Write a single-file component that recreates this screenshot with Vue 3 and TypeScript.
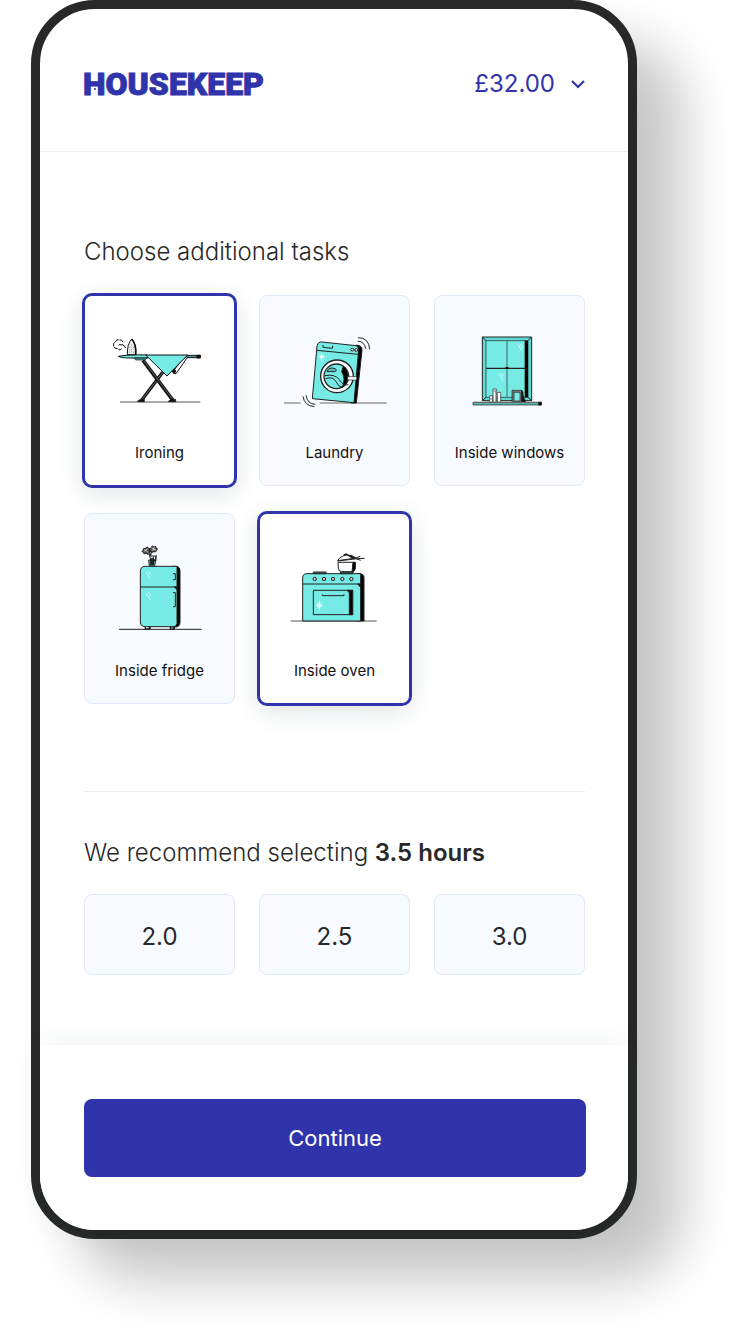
<script setup lang="ts">
import { ref } from 'vue'

interface Task {
  id: string
  label: string
  viewBox: string
}

const tasks: Task[] = [
  { id: 'ironing', label: 'Ironing', viewBox: '30 33 447 423' },
  { id: 'laundry', label: 'Laundry', viewBox: '16 33 447 423' },
  { id: 'windows', label: 'Inside windows', viewBox: '30 33 447 423' },
  { id: 'fridge', label: 'Inside fridge', viewBox: '30 27 447 423' },
  { id: 'oven', label: 'Inside oven', viewBox: '15 27 447 423' },
]
const hours = ['2.0', '2.5', '3.0']

const selectedTasks = ref<string[]>(['ironing', 'oven'])
const selectedHours = ref('')
</script>

<template>
  <main class="stage">
    <div class="phone">
      <header class="header">
        <a class="logo" href="#">HOUSEKEEP</a>
        <button class="price" type="button">
          £32.00
          <svg class="chevron" viewBox="0 0 16 12" aria-hidden="true">
            <path d="M2 3l6 6 6-6" fill="none" stroke="currentColor" stroke-width="2.2" />
          </svg>
        </button>
      </header>

      <form class="content" @submit.prevent>
        <h2 class="title">Choose additional tasks</h2>
        <div class="grid">
          <label
            v-for="task in tasks"
            :key="task.id"
            class="card task"
            :class="{ selected: selectedTasks.includes(task.id) }"
          >
            <input v-model="selectedTasks" class="control" type="checkbox" :value="task.id" />
            <svg class="art" :viewBox="task.viewBox" aria-hidden="true">
              <g v-if="task.id === 'ironing'" fill="none" stroke="#111" stroke-width="3">
                <path d="M135 351H376" stroke="#555" />
                <path d="M263 262L201 344" stroke-width="10" />
                <path d="M263 262L201 344" stroke="#999" stroke-width="2" />
                <path d="M204 226L293 345" stroke-width="11" />
                <path d="M207 228L291 341" stroke="#888" stroke-width="2" />
                <path d="M188 348l8-5h12v7h-20zM281 348l8-5h13v7h-21z" fill="#111" stroke-width="2" />
                <path d="M130 214q30-6 86-4l3 9h-52q-29 0-37-5z" fill="#76eae4" />
                <path d="M178 219h38l-6 6h-28z" fill="#459b98" stroke-width="2" />
                <path d="M294 260l35-46 6 6-31 45q-6 4-10-5z" fill="#fff" />
                <path d="M289 257l8 9 6-8-7-6z" fill="#111" />
                <path d="M334 211h42v7h-40z" fill="#459b98" />
                <path d="M366 211h10v8h-10z" fill="#111" />
                <path d="M212 210H338L276 273z" fill="#76eae4" />
                <path d="M157 209q-1-31 13-47 13 14 12 47z" fill="#eee" />
                <path d="M170 162q15 15 12 47" stroke-width="5" />
                <path d="M164 186v20M170 178v28M176 186v20" stroke="#777" stroke-width="2" stroke-dasharray="3 4" />
                <path d="M144 172q-2-9-11-7-9-4-11 5-9 4-6 12 0 10 11 8 6 9 13 1" stroke-dasharray="14 2" />
                <path d="M131 181q4-5 7-1 7-4 8 3 5-1 5 6" />
              </g>

              <g v-else-if="task.id === 'laundry'" fill="none" stroke="#222" stroke-width="3">
                <path d="M88 354h50M195 354h201" stroke="#666" />
                <path d="M305 180q18 2 17 15L305 354h-16z" fill="#000" />
                <path d="M202 171l102 11q8 2 8 11l-14 160-125-12 14-158q3-14 15-12z" fill="#76eae4" />
                <path d="M187 196l124 12" />
                <path d="M205 180v7l28 3 1-8" />
                <ellipse cx="293" cy="194" rx="5" ry="4" fill="#ddd" />
                <ellipse cx="305" cy="195" rx="5" ry="4" fill="#ddd" />
                <circle cx="247" cy="274" r="49" fill="#fff" stroke-width="4" />
                <circle cx="245" cy="274" r="37" fill="#76eae4" stroke-width="4" />
                <path d="M266 244q15 12 14 31-1 21-17 32 11-28-2-47z" fill="#000" />
                <path d="M211 272q29-6 43 12 12 20 27 15M213 281q22-8 31 9 7 16 20 17" />
                <path d="M217 260q5-16 25-9 7 8-3 9-13-1-22 0z" fill="#58bcb8" />
                <path d="M279 275h27v10h-27z" fill="#fff" stroke-width="2" />
                <path d="M201 202v27M188 215h27M192 206l18 18M210 206l-18 18" stroke="#c8faf8" stroke-width="2" />
                <path d="M201 208l3 5 5 2-5 3-3 5-3-5-5-3 5-2z" fill="#fff" stroke="none" />
                <path d="M310 158q33 0 35 35M309 168q21 2 24 23M154 331q4 26 28 27M145 334q4 28 34 31" />
              </g>

              <g v-else-if="task.id === 'windows'" fill="none" stroke="#222" stroke-width="3">
                <path d="M172 156h148v191H172z" fill="#5fd9d3" />
                <path d="M183 167h126v170H183z" fill="#76eae4" stroke-width="2" />
                <path d="M172 156l11 11M320 156l-11 11M172 347l11-10M320 347l-11-10" />
                <path d="M299 167h10v170h-10z" fill="#000" stroke="none" />
                <path d="M246 167v168" stroke-width="2" />
                <path d="M183 250h117" stroke-width="4" />
                <ellipse cx="246" cy="249" rx="6" ry="3" fill="#000" stroke="none" />
                <path d="M279 178l13 21M286 176l8 13M222 265l13 22M229 263l8 12" stroke="#c9fffb" />
                <path d="M194 332h9v20h-9zM204 312h10v40h-10zM217 322h10v30h-10z" fill="#fff" stroke-width="2" />
                <path d="M195 342h6M205 318h8v34" stroke="#777" />
                <path d="M261 316h29v36h-29z" fill="#777" stroke-width="2" />
                <path d="M267 322h18v26h-18z" fill="#76eae4" stroke-width="2" />
                <path d="M290 316l4 5v31l-4-2zM293 328l9 23h-8z" fill="#000" stroke-width="2" />
                <path d="M144 352h205v8H144z" fill="#52b8b4" stroke-width="2" />
                <path d="M145 352h203" stroke="#756666" />
                <path d="M341 352h8v8h-8z" fill="#000" />
              </g>

              <g v-else-if="task.id === 'fridge'" fill="none" stroke="#222" stroke-width="3">
                <path d="M132 373h248" />
                <path d="M211 364v8h13v-8M286 364v8h12v-8" fill="#fff" stroke-width="4" />
                <path d="M224 364v9M297 364v9" stroke-width="6" />
                <path d="M291 184h11q13 0 13 14v154q0 14-14 14h-15z" fill="#000" />
                <path d="M211 184h95v172q-2 8-9 9h-86q-15 0-15-14V199q0-15 15-15z" fill="#76eae4" />
                <path d="M196 246h108" />
                <path d="M294 206h7v18h-7M294 263h7v42h-7" />
                <path d="M298 246h8v8z" fill="#000" />
                <path d="M213 201l13 21M220 198l8 12M213 264l13 20M220 261l8 13" stroke="#c9fffb" />
                <path d="M221 165h21l-3 18h-16z" fill="#61bcb8" />
                <path d="M228 169l-5-22M235 181v-26M239 169l5-18M225 153h18v14h-18" />
                <path d="M229 160l8 2-3 17h-8z" fill="#222" />
                <path d="M224 144q-6 8-10 1-9 4-10-3-6-3 0-6-1-7 7-6 7-8 9 0 7-1 3 5zM224 137q-2-9 5-8 0-9 7-4 8-3 8 4 6 3 1 7-2 7-8 4-8 6-13-3z" fill="#555" />
                <path d="M207 139l11-8M209 133l9 9M229 128l14 8M233 138l6-13" stroke="#fff" stroke-width="2" />
                <path d="M223 139l4 13 3-13" />
              </g>

              <g v-else fill="none" stroke="#222" stroke-width="3">
                <path d="M107 348h258" stroke="#555" />
                <path d="M305 206h9q13 0 13 13v129h-22z" fill="#000" />
                <path d="M155 206h162v142H143V219q0-13 12-13z" fill="#76eae4" />
                <path d="M143 237h174" />
                <path d="M308 237h10v11z" fill="#000" />
                <path d="M175 201h38v5h-38zM256 201h38v5h-38z" fill="#397e7a" />
                <circle v-for="cx in [179, 207, 234, 262, 289]" :key="cx" :cx="cx" cy="222" r="5" fill="#ccc" />
                <path d="M175 256h118v73H175z" fill="#76eae4" />
                <path d="M283 256h10v73h-10z" fill="#000" />
                <path d="M276 256h8v8z" fill="#000" />
                <path d="M202 268v4h65v-4" />
                <path d="M193 284l3 14 9 3-9 3-3 15-3-15-9-3 9-3z" fill="#fff" stroke="none" />
                <path d="M184 292l18 18M202 292l-18 18" stroke="#bffffc" stroke-width="2" />
                <path d="M249 172h51v18q-1 10-9 10h-31q-10-1-10-10z" fill="#fff" />
                <path d="M294 172h7v18q-2 11-10 10z" fill="#000" />
                <path d="M248 167q6-13 27-17 19 0 28 9z" fill="#fff" />
                <path d="M277 150q16 2 22 8l-8 1zM266 150q6-7 13-1z" fill="#000" />
                <path d="M248 168l60-7 21-1M302 159l14-5M303 161l14 5" />
              </g>
            </svg>
            <span class="task-label">{{ task.label }}</span>
          </label>
        </div>

        <hr class="divider" />

        <h2 class="title hours-title">We recommend selecting <strong>3.5 hours</strong></h2>
        <div class="grid">
          <label
            v-for="hour in hours"
            :key="hour"
            class="card hour"
            :class="{ selected: selectedHours === hour }"
          >
            <input v-model="selectedHours" class="control" type="radio" name="hours" :value="hour" />
            {{ hour }}
          </label>
        </div>
      </form>

      <footer class="footer">
        <button class="continue" type="button">Continue</button>
      </footer>
    </div>
  </main>
</template>

<style>
body {
  margin: 0;
  background: #fff;
}
</style>

<style scoped>
.stage {
  box-sizing: border-box;
  min-height: 100vh;
  padding: 0 95px 95px 31px;
  overflow: hidden;
  font-family: Inter, "Liberation Sans", sans-serif;
  color: #282828;
}

.phone {
  border: 9px solid #282828;
  border-radius: 64px;
  background: #fff;
  box-shadow: 46px 42px 52px rgba(0, 0, 0, 0.22);
}

.header {
  display: flex;
  align-items: center;
  justify-content: space-between;
  height: 143px;
  padding: 8px 42px 0 43px;
  box-sizing: border-box;
  border-bottom: 1px solid #eceded;
}

.logo {
  position: relative;
  font-family: Roboto, sans-serif;
  font-size: 32px;
  line-height: 36px;
  font-weight: 900;
  color: #3034aa;
  text-decoration: none;
  -webkit-text-stroke: 1px #3034aa;
}

/* Door handle inside the H */
.logo::after {
  content: "";
  position: absolute;
  left: 11px;
  top: 22px;
  width: 2px;
  height: 2px;
  border-radius: 1px;
  background: #3034aa;
}

.price {
  display: flex;
  align-items: center;
  gap: 15px;
  padding: 0;
  border: 0;
  background: none;
  font: 400 24px/32px Inter, sans-serif;
  color: #3034aa;
}

.chevron {
  width: 16px;
  height: 12px;
}

.content {
  padding: 84px 43px 70px 44px;
}

.title {
  margin: 0 0 27px;
  font-size: 24px;
  line-height: 32px;
  font-weight: 300;
}

.hours-title {
  margin-bottom: 25px;
}

.title strong {
  font-weight: 600;
}

.grid {
  display: grid;
  grid-template-columns: repeat(3, 1fr);
  gap: 27px 24px;
}

.card {
  position: relative;
  box-sizing: border-box;
  border: 1px solid #e0e9fc;
  border-radius: 8px;
  background: #f7fbff;
}

.card.selected {
  border-color: #3034aa;
  background: #fff;
  box-shadow: 0 0 0 2px #3034aa, 0 6px 26px rgba(30, 70, 80, 0.16);
}

.control {
  position: absolute;
  inset: 0;
  width: 100%;
  height: 100%;
  margin: 0;
  opacity: 0;
}

.task {
  display: flex;
  flex-direction: column;
  height: 191px;
}

.art {
  width: 100%;
  height: 141px;
}

.task-label {
  font-size: 15px;
  line-height: 32px;
  text-align: center;
  color: #111;
}

.divider {
  height: 1px;
  margin: 87px 0 45px;
  border: 0;
  background: #e9ebed;
}

.hour {
  display: flex;
  align-items: center;
  justify-content: center;
  padding: 26px 0 21px;
  font-size: 24px;
  line-height: 32px;
}

.footer {
  padding: 54px 42px 53px 44px;
  border-radius: 0 0 55px 55px;
  background: #fff;
  box-shadow: 0 0 32px rgba(30, 70, 80, 0.08);
}

.continue {
  width: 100%;
  height: 78px;
  border: 0;
  border-radius: 8px;
  background: #3034aa;
  font: 400 22px/32px Inter, sans-serif;
  color: #fff;
}
</style>
